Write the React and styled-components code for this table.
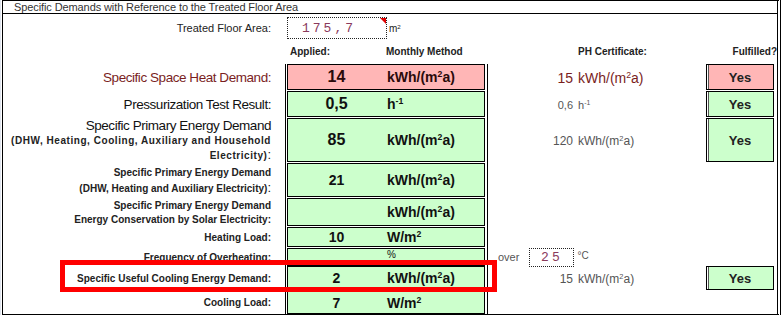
import React from 'react';
import styled, { createGlobalStyle } from 'styled-components';

const Global = createGlobalStyle`
  html, body { margin: 0; padding: 0; background: #fff; }
  body { font-family: "Liberation Sans", Arial, sans-serif; color: #111; }
`;

const PINK = '#ffb6b6';
const GREEN = '#ccffcc';
const MAROON = '#7a1e1e';
const COLS = '282px 203px 216px 73px';

const Page = styled.div`
  width: 781px;
  height: 315px;
  box-sizing: border-box;
  border-left: 1px solid #dfe4ee;
  padding-left: 1px;
`;

const Frame = styled.div`
  position: relative;
  width: 779px;
  height: 315px;
  box-sizing: border-box;
  border: 1px solid #000;
  border-right: 4px double #000;
  overflow: hidden;
`;

const Title = styled.div`
  height: 12px;
  line-height: 12px;
  border-bottom: 1px solid #000;
  padding-left: 11px;
  font-size: 11px;
  letter-spacing: -0.1px;
  color: #333;
  white-space: nowrap;
`;

const Grid = styled.div`
  display: grid;
  grid-template-columns: ${COLS};
  height: ${(p) => p.$h}px;
`;

const FloorLabel = styled.div`
  text-align: right;
  padding-right: 14px;
  font-size: 11px;
  line-height: 28px;
  color: #222;
`;

const FloorCell = styled.div`
  display: flex;
  align-items: flex-start;
  gap: 2px;
  padding-left: 2px;
`;

const DottedBox = styled.div`
  position: relative;
  box-sizing: border-box;
  width: ${(p) => p.$w}px;
  height: ${(p) => p.$h}px;
  margin-top: ${(p) => p.$top || 0}px;
  margin-left: ${(p) => p.$ml || 0}px;
  border: 1px dotted #222;
  display: flex;
  align-items: center;
  justify-content: center;
  padding-right: ${(p) => p.$pr || 0}px;
  font-family: "Liberation Mono", "Courier New", monospace;
  font-size: 13px;
  letter-spacing: 3px;
  color: #8a3a5c;
`;

const CommentMark = styled.span`
  position: absolute;
  top: 0;
  right: 0;
  width: 0;
  height: 0;
  border-top: 6px solid #e00000;
  border-left: 6px solid transparent;
`;

const SmallUnit = styled.span`
  font-size: 10px;
  color: #222;
  margin-top: ${(p) => p.$top || 0}px;
`;

const Sup = styled.sup`
  font-size: 0.62em;
  line-height: 0;
  vertical-align: 0.55em;
`;

const HeadText = styled.div`
  font-size: 10px;
  font-weight: bold;
  line-height: 20px;
  color: #222;
  white-space: nowrap;
  padding-left: ${(p) => p.$pl || 0}px;
  text-align: ${(p) => p.$align || 'left'};
`;

const HeadApplied = styled.div`
  display: grid;
  grid-template-columns: 101px 1fr;
`;

const LabelCell = styled.div`
  display: flex;
  flex-direction: column;
  justify-content: center;
  align-items: flex-end;
  text-align: right;
  padding-right: 14px;
  white-space: nowrap;
`;

const MainLabel = styled.div`
  font-size: 13.5px;
  letter-spacing: -0.45px;
  line-height: ${(p) => p.$lh || 15}px;
  color: ${(p) => p.$color || '#111'};
`;

const SmallLabel = styled.div`
  font-size: 10px;
  font-weight: bold;
  line-height: ${(p) => p.$lh || 14}px;
  letter-spacing: ${(p) => p.$ls || 0}px;
  color: #222;
`;

const Colon = styled.span`
  font-size: 13px;
  font-weight: normal;
  letter-spacing: 0;
`;

const AppliedWrap = styled.div`
  border-left: 1px solid #000;
  border-right: 1px solid #000;
  padding: 0 2px ${(p) => (p.$last ? 0 : 1)}px 1px;
  display: flex;
`;

const ValueBox = styled.div`
  flex: 1;
  box-sizing: border-box;
  border: 1px solid #000;
  background: ${(p) => p.$bg};
  display: grid;
  grid-template-columns: 97px 1fr;
  align-items: ${(p) => p.$align || 'center'};
`;

const Value = styled.div`
  text-align: center;
  font-size: ${(p) => (p.$big ? 16 : 14)}px;
  font-weight: bold;
  color: ${(p) => p.$color || '#111'};
`;

const Unit = styled.div`
  padding-left: 2px;
  font-size: ${(p) => p.$size || 14}px;
  font-weight: ${(p) => (p.$light ? 'normal' : 'bold')};
  line-height: ${(p) => (p.$light ? '12px' : 'normal')};
  color: ${(p) => p.$color || '#111'};
  white-space: nowrap;
`;

const PhCell = styled.div`
  display: grid;
  grid-template-columns: 85px 1fr;
  column-gap: 5px;
  align-items: center;
  white-space: nowrap;
`;

const PhNum = styled.div`
  text-align: right;
  font-size: ${(p) => p.$size}px;
  color: ${(p) => p.$color};
`;

const PhUnit = styled.div`
  font-size: ${(p) => p.$size}px;
  color: ${(p) => p.$color};
`;

const OverCell = styled.div`
  display: flex;
  align-items: flex-start;
  padding-left: 10px;
  white-space: nowrap;
`;

const GrayText = styled.span`
  font-size: ${(p) => p.$size || 11}px;
  color: #555;
  margin: ${(p) => p.$m || '0'};
  line-height: ${(p) => p.$lh || 'normal'};
`;

const YesWrap = styled.div`
  padding: 0 3px ${(p) => (p.$last ? 0 : 1)}px 2px;
  display: flex;
`;

const YesBox = styled.div`
  flex: 1;
  box-sizing: border-box;
  border: 1px solid #000;
  box-shadow: inset 1px 0 0 #fff, inset 2px 0 0 #555;
  background: ${(p) => p.$bg};
  display: flex;
  align-items: center;
  justify-content: center;
  font-size: 13px;
  font-weight: bold;
  color: #222;
`;

const Highlight = styled.div`
  position: absolute;
  left: 57px;
  top: 259px;
  width: 437px;
  height: 32px;
  box-sizing: border-box;
  border: 5px solid #ff0000;
  pointer-events: none;
`;

const KWh = () => (
  <>
    kWh/(m<Sup>2</Sup>a)
  </>
);
const Wm2 = () => (
  <>
    W/m<Sup>2</Sup>
  </>
);
const H1 = () => (
  <>
    h<Sup>-1</Sup>
  </>
);

const rows = [
  {
    h: 27,
    label: <MainLabel $color={MAROON}>Specific Space Heat Demand:</MainLabel>,
    value: '14',
    big: true,
    valueColor: '#2a0a0a',
    unit: <KWh />,
    unitColor: '#2a0a0a',
    bg: PINK,
    ph: { num: '15', unit: <KWh />, size: 14, numSize: 14, color: MAROON },
    yes: PINK,
  },
  {
    h: 27,
    label: <MainLabel>Pressurization Test Result:</MainLabel>,
    value: '0,5',
    big: true,
    unit: <H1 />,
    bg: GREEN,
    ph: { num: '0,6', unit: <H1 />, size: 11, numSize: 11, color: '#555' },
    yes: GREEN,
  },
  {
    h: 45,
    label: (
      <>
        <MainLabel $lh={14}>Specific Primary Energy Demand</MainLabel>
        <SmallLabel $lh={15} $ls={0.55}>(DHW, Heating, Cooling, Auxiliary and Household</SmallLabel>
        <SmallLabel $lh={14} $ls={0.55}>
          Electricity)<Colon>:</Colon>
        </SmallLabel>
      </>
    ),
    value: '85',
    big: true,
    unit: <KWh />,
    bg: GREEN,
    ph: { num: '120', unit: <KWh />, size: 12, numSize: 12, color: '#555' },
    yes: GREEN,
  },
  {
    h: 35,
    label: (
      <>
        <SmallLabel $lh={15}>Specific Primary Energy Demand</SmallLabel>
        <SmallLabel $lh={15}>
          (DHW, Heating and Auxiliary Electricity)<Colon>:</Colon>
        </SmallLabel>
      </>
    ),
    value: '21',
    unit: <KWh />,
    bg: GREEN,
  },
  {
    h: 29,
    label: (
      <>
        <SmallLabel $lh={14}>Specific Primary Energy Demand</SmallLabel>
        <SmallLabel $lh={14}>Energy Conservation by Solar Electricity:</SmallLabel>
      </>
    ),
    value: '',
    unit: <KWh />,
    bg: GREEN,
  },
  {
    h: 21,
    label: <SmallLabel>Heating Load:</SmallLabel>,
    value: '10',
    unit: <Wm2 />,
    bg: GREEN,
  },
  {
    h: 18,
    label: <SmallLabel>Frequency of Overheating:</SmallLabel>,
    value: '',
    unit: '%',
    unitLight: true,
    align: 'start',
    bg: GREEN,
    over: true,
  },
  {
    h: 25,
    label: <SmallLabel>Specific Useful Cooling Energy Demand:</SmallLabel>,
    value: '2',
    unit: <KWh />,
    bg: GREEN,
    ph: { num: '15', unit: <KWh />, size: 12, numSize: 12, color: '#555' },
    yes: GREEN,
  },
  {
    h: 23,
    last: true,
    label: <SmallLabel>Cooling Load:</SmallLabel>,
    value: '7',
    unit: <Wm2 />,
    bg: GREEN,
  },
];

export default function App() {
  return (
    <Page>
      <Global />
      <Frame>
        <Title>Specific Demands with Reference to the Treated Floor Area</Title>

        <Grid $h={28}>
          <FloorLabel>Treated Floor Area:</FloorLabel>
          <FloorCell>
            <DottedBox $w={100} $h={22} $top={3} $pr={16}>
              175,7
              <CommentMark />
            </DottedBox>
            <SmallUnit $top={9}>
              m<Sup>2</Sup>
            </SmallUnit>
          </FloorCell>
          <div />
          <div />
        </Grid>

        <Grid $h={22}>
          <div />
          <HeadApplied>
            <HeadText $pl={5}>Applied:</HeadText>
            <HeadText>Monthly Method</HeadText>
          </HeadApplied>
          <HeadText $pl={90}>PH Certificate:</HeadText>
          <HeadText $align="right">Fulfilled?</HeadText>
        </Grid>

        {rows.map((r, i) => (
          <Grid key={i} $h={r.h}>
            <LabelCell>{r.label}</LabelCell>
            <AppliedWrap $last={r.last}>
              <ValueBox $bg={r.bg} $align={r.align}>
                <Value $big={r.big} $color={r.valueColor}>
                  {r.value}
                </Value>
                <Unit $light={r.unitLight} $size={r.unitLight ? 10 : 14} $color={r.unitColor}>
                  {r.unit}
                </Unit>
              </ValueBox>
            </AppliedWrap>
            {r.ph ? (
              <PhCell>
                <PhNum $size={r.ph.numSize} $color={r.ph.color}>
                  {r.ph.num}
                </PhNum>
                <PhUnit $size={r.ph.size} $color={r.ph.color}>
                  {r.ph.unit}
                </PhUnit>
              </PhCell>
            ) : r.over ? (
              <OverCell>
                <GrayText $lh="18px">over</GrayText>
                <DottedBox $w={45} $h={19} $ml={10}>
                  25
                </DottedBox>
                <GrayText $size={10} $m="0 0 0 3px" $lh="16px">
                  °C
                </GrayText>
              </OverCell>
            ) : (
              <div />
            )}
            {r.yes ? (
              <YesWrap $last={r.last}>
                <YesBox $bg={r.yes}>Yes</YesBox>
              </YesWrap>
            ) : (
              <div />
            )}
          </Grid>
        ))}

        <Highlight />
      </Frame>
    </Page>
  );
}
